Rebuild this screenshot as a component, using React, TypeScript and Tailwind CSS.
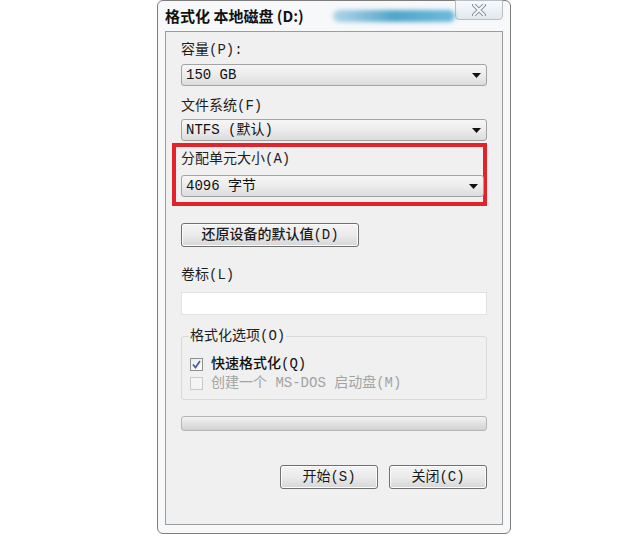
import React from "react";

const song = "font-['Liberation_Mono','Noto_Sans_CJK_SC',monospace] text-[14px] leading-[16px]";

function Arrow() {
    return (
        <svg width="9" height="5" viewBox="0 0 9 5">
            <path d="M0 0 H9 L4.5 5 Z" fill="#111" />
        </svg>
    );
}

function Combo({ text, className = "" }: { text: string; className?: string }) {
    return (
        <div className={`h-[22px] flex items-center justify-between pl-[4px] pr-[5px] border border-[#a3a3a3] rounded-[3px] bg-linear-to-b from-[#f6f6f6] via-[#ececec] to-[#dcdcdc] ${className}`}>
            <span className={`${song} text-[#111] whitespace-pre`}>{text}</span>
            <Arrow />
        </div>
    );
}

function WinButton({ label, className = "" }: { label: string; className?: string }) {
    return (
        <div className={`h-[24px] flex items-center justify-center border border-[#707070] rounded-[3px] bg-linear-to-b from-[#f4f4f4] via-[#ebebeb] to-[#d6d6d6] shadow-[inset_0_0_0_1px_#fcfcfc] ${className}`}>
            <span className={`${song} text-[#1a1a1a] whitespace-pre`}>{label}</span>
        </div>
    );
}

function CheckBox({ checked, disabled }: { checked?: boolean; disabled?: boolean }) {
    return (
        <div className={`w-[13px] h-[13px] border flex items-center justify-center ${disabled ? "border-[#c9c9c9] bg-[#f4f4f4]" : "border-[#8e8f8f] bg-linear-to-br from-[#e8ebef] to-white"}`}>
            {checked && (
                <svg width="9" height="9" viewBox="0 0 9 9">
                    <path d="M1 4.5 L3.5 7.5 L8 1" fill="none" stroke="#4a5f97" strokeWidth="1.8" />
                </svg>
            )}
        </div>
    );
}

export default function App() {
    return (
        <div className="w-[640px] h-[536px] bg-white overflow-hidden">
            <div className="ml-[157px] w-[354px] h-[534px] rounded-[6px] border border-[#7d7d7d] bg-[#f6f8fa] flex flex-col px-[7px] pb-[8px]">
                {/* barra de titulo */}
                <div className="h-[30px] flex items-center">
                    <span className="font-['Noto_Sans_CJK_SC',sans-serif] font-bold text-[15px] leading-[18px] text-[#111] whitespace-pre">格式化 本地磁盘 (D:)</span>
                    <div className="flex-1 ml-[29px] h-[12px] rounded-full bg-linear-to-r from-[#a9d3e6] via-[#3f9cc6] to-[#5fb4d8] blur-[2px] opacity-90" />
                    <div className="self-start -mt-px w-[48px] h-[20px] rounded-b-[4px] border border-[#b6bec8] bg-linear-to-b from-[#f8fafc] to-[#e2e8ee] flex items-center justify-center">
                        <svg width="16" height="12" viewBox="0 0 16 12">
                            <path d="M3 1 L13 11 M13 1 L3 11" stroke="#8a96a3" strokeWidth="4" strokeLinecap="round" />
                            <path d="M3 1 L13 11 M13 1 L3 11" stroke="#f4f6f8" strokeWidth="2" strokeLinecap="round" />
                        </svg>
                    </div>
                </div>

                {/* area do cliente */}
                <div className="flex-1 border border-[#9c9c9c] bg-[#f0f0f0] flex flex-col px-[15px]">
                    <div className={`${song} text-[#1e1e1e] mt-[10px]`}>容量(P):</div>
                    <Combo text="150 GB" className="mt-[6px]" />

                    <div className={`${song} text-[#1e1e1e] mt-[12px]`}>文件系统(F)</div>
                    <Combo text="NTFS (默认)" className="mt-[5px]" />

                    {/* destaque vermelho */}
                    <div className="mt-[2px] -ml-[9px] border-4 border-[#e2232b] pl-[5px] pt-[4px] pb-[5px]">
                        <div className={`${song} text-[#1e1e1e]`}>分配单元大小(A)</div>
                        <Combo text="4096 字节" className="mt-[8px] -mr-[1px]" />
                    </div>

                    <WinButton label="还原设备的默认值(D)" className="mt-[17px] w-[178px] font-medium" />

                    <div className={`${song} text-[#1e1e1e] mt-[20px]`}>卷标(L)</div>
                    <div className="mt-[9px] h-[23px] border border-[#e2e2e2] bg-white" />

                    <fieldset className="mt-[13px] border border-[#d9d9d9] rounded-[3px] px-[7px] pb-[8px]">
                        <legend className={`${song} text-[#1e1e1e] px-[1px]`}>格式化选项(O)</legend>
                        <div className="mt-[12px] ml-[1px] h-[16px] flex items-center gap-[8px]">
                            <CheckBox checked />
                            <span className={`${song} text-[#111] font-medium`}>快速格式化(Q)</span>
                        </div>
                        <div className="mt-[3px] ml-[1px] h-[16px] flex items-center gap-[8px]">
                            <CheckBox disabled />
                            <span className={`${song} text-[#a3a3a3] whitespace-pre`}>创建一个 MS-DOS 启动盘(M)</span>
                        </div>
                    </fieldset>

                    {/* barra de progresso */}
                    <div className="mt-[16px] h-[15px] rounded-[3px] border border-[#b5b5b5] bg-linear-to-b from-[#f3f3f3] via-[#e2e2e2] to-[#d2d2d2]" />

                    <div className="mt-[34px] flex justify-end gap-[11px]">
                        <WinButton label="开始(S)" className="w-[98px]" />
                        <WinButton label="关闭(C)" className="w-[98px]" />
                    </div>
                </div>
            </div>
        </div>
    );
}
